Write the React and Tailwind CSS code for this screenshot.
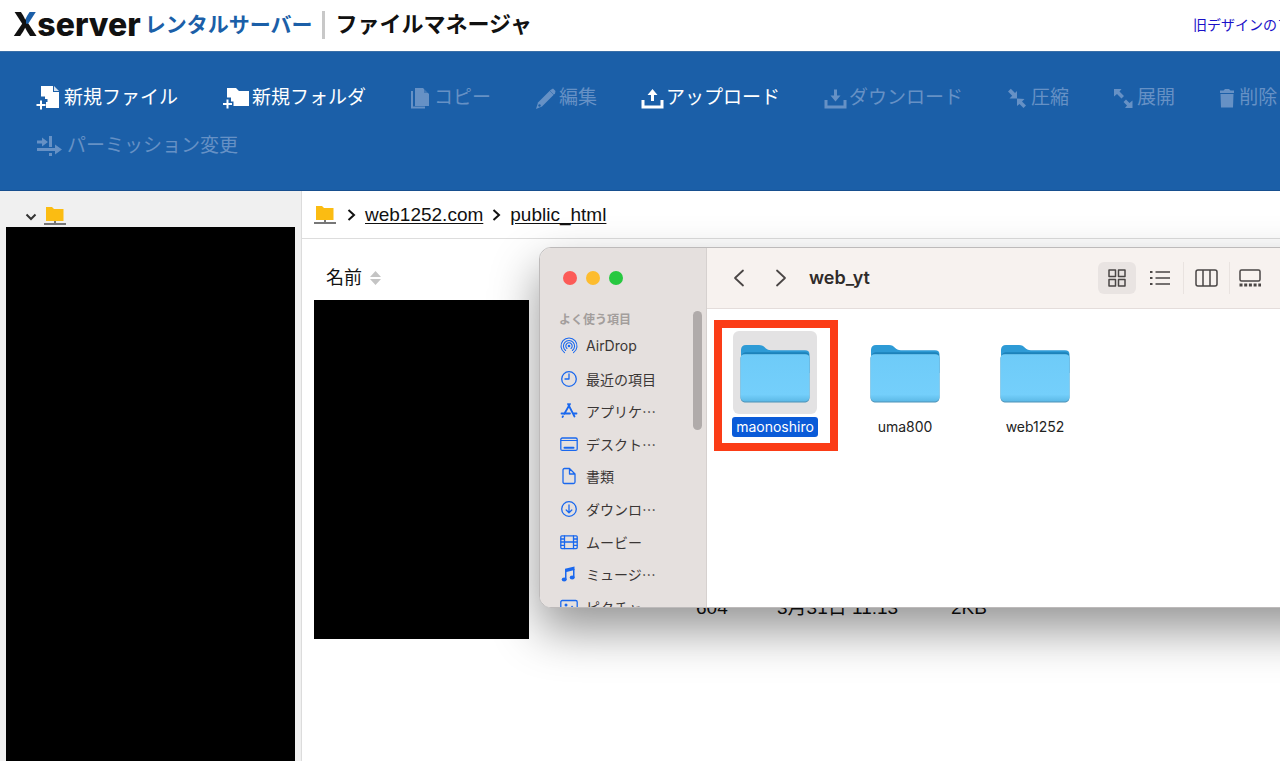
const ink = "text-[#111111]";

function Svg({ w, h, box, className = "", children }) {
  return (
    <svg width={w} height={h} viewBox={box || `0 0 ${w} ${h}`} className={`shrink-0 ${className}`} fill="none" aria-hidden="true">
      {children}
    </svg>
  );
}

const NewFileIcon = () => (
  <Svg w={24} h={26}>
    <path d="M5 1H17V7H23V23H10V17H11.500V14H9V11.500H5Z" fill="currentColor" />
    <path d="M18 1L23 6H18Z" fill="currentColor" fillOpacity=".8" />
    <path d="M5 15.500V24.500M.5 20H9.500" stroke="currentColor" strokeWidth="2" />
  </Svg>
);
const NewFolderIcon = () => (
  <Svg w={28} h={26}>
    <path d="M5 3H14L17 6H27V21H11.500V16.500H9V12.500H5Z" fill="currentColor" />
    <path d="M5.500 14.500V23.500M1 19H10" stroke="currentColor" strokeWidth="2" />
  </Svg>
);
const CopyIcon = () => (
  <Svg w={20} h={26}>
    <path d="M5 3H13L19 9V21H5Z" fill="currentColor" />
    <path d="M14 3L19 8H14Z" fill="#1b5fa8" fillOpacity=".5" />
    <path d="M2 6V22.500H15" stroke="currentColor" strokeWidth="2" />
  </Svg>
);
const EditIcon = () => (
  <Svg w={22} h={26}>
    <path d="M15.500 5L18 3.500L20.500 6L20 8.500L7 21.500L1 24L3 17.500Z" fill="currentColor" />
    <path d="M14.500 5.500L19 10" stroke="#1b5fa8" strokeOpacity=".5" />
    <circle cx="4.500" cy="20.500" r="1.200" fill="#1b5fa8" />
  </Svg>
);
const UploadIcon = () => (
  <Svg w={23} h={26}>
    <path d="M2 15V22H21V15" stroke="currentColor" strokeWidth="3" />
    <path d="M11.500 4L16.500 10H13V16H10V10H6.500Z" fill="currentColor" />
  </Svg>
);
const DownloadIcon = () => (
  <Svg w={23} h={26}>
    <path d="M2 15V22H21V15" stroke="currentColor" strokeWidth="3" />
    <path d="M11.500 16.500L6.500 10.500H10V4.500H13V10.500H16.500Z" fill="currentColor" />
  </Svg>
);
const CompressIcon = () => (
  <Svg w={20} h={26}>
    <path d="M10 13.500V6L8 8L3.800 3.800L1 6.600L5.200 10.800L2.500 13.500Z" fill="currentColor" />
    <path d="M10 13.500V21L12.500 19L16.500 23L19 20.500L15 16.500L17.500 14Z" fill="currentColor" />
  </Svg>
);
const ExpandIcon = () => (
  <Svg w={20} h={26}>
    <path d="M1 4H8.500L6.500 6.500L11 11L8.500 13.500L4 9L1 11.500Z" fill="currentColor" />
    <path d="M19.500 23H12L14 20.500L10.500 17L13 14.500L16.500 18L19.500 15.500Z" fill="currentColor" />
  </Svg>
);
const TrashIcon = () => (
  <Svg w={16} h={26}>
    <path d="M4.500 5.500L6 4H10L11.500 5.500H15V8H1V5.500ZM1.500 9H14.500L14 22.500H2Z" fill="currentColor" />
  </Svg>
);
const PermissionIcon = () => (
  <Svg w={27} h={26}>
    <path d="M1 9H8M1 16.500H20" stroke="currentColor" strokeWidth="3" />
    <path d="M6 4.500L12 9L6 13.500ZM19 11.500L26 16.500L19 21.500Z" fill="currentColor" />
    <path d="M14.500 3V14M14.500 20V23" stroke="currentColor" strokeWidth="3" />
  </Svg>
);

const toolRows = [
  [
    ["新規ファイル", NewFileIcon, true, "gap-1"],
    ["新規フォルダ", NewFolderIcon, true, "gap-0.5"],
    ["コピー", CopyIcon, false, "gap-1"],
    ["編集", EditIcon, false, "gap-0.5"],
    ["アップロード", UploadIcon, true, "gap-0.5"],
    ["ダウンロード", DownloadIcon, false, "gap-0.5"],
    ["圧縮", CompressIcon, false, "gap-1"],
    ["展開", ExpandIcon, false, "gap-1"],
    ["削除", TrashIcon, false, "gap-1"],
  ],
  [["パーミッション変更", PermissionIcon, false, "gap-1"]],
];

function ServerFolder() {
  return (
    <Svg w={22} h={20}>
      <path d="M2 1H8L10 3H19.500V15H2Z" fill="#fbbc12" />
      <path d="M0 18H22M11 15V19" stroke="#777777" strokeWidth="2" />
    </Svg>
  );
}

function Chevron() {
  return (
    <Svg w={9} h={14}>
      <path d="M1.500 2L7 7L1.500 12" stroke="#111111" strokeWidth="2" />
    </Svg>
  );
}

const s = { stroke: "#1a68ee", strokeWidth: 1.3, strokeLinecap: "round", strokeLinejoin: "round" };
const places = [
  ["AirDrop", <>
    <circle cx="9" cy="9" r="1.300" fill="#1a68ee" />
    <path {...s} strokeWidth="1.1" d="M7 11.500A3.200 3.200 0 1 1 11 11.500M5.600 13.500A5.600 5.600 0 1 1 12.400 13.500M4.500 15.600A8 8 0 1 1 13.500 15.600" />
  </>],
  ["最近の項目", <><circle {...s} cx="9" cy="9" r="7.300" /><path {...s} d="M9 4V9H5" /></>],
  ["アプリケ…", <path {...s} strokeWidth="1.8" d="M10 2L4.200 12M8 2L14.500 14.500M1.500 11.500H10M13 11.500H16.500M3 14.200L2.500 15" />],
  ["デスクト…", <><rect {...s} x=".8" y="3" width="16.400" height="12.400" rx="1.500" /><path {...s} strokeWidth="1" d="M1 5.500H17" /><path {...s} strokeWidth="2" d="M4.500 12.700H13.500" /></>],
  ["書類", <path {...s} d="M4.500 1.500H9.500L15 7V15C15 16 14.500 16.500 13.500 16.500H4.500C3.500 16.500 3 16 3 15V3C3 2 3.500 1.500 4.500 1.500ZM9.500 1.500V7H15" />],
  ["ダウンロ…", <><circle {...s} cx="9" cy="9" r="7.300" /><path {...s} d="M9 5V12.500M6.200 10L9 12.700L11.800 10" /></>],
  ["ムービー", <><rect {...s} x=".8" y="2.800" width="16.400" height="12.800" rx="1" /><path {...s} d="M4.500 3V15.500M13.500 3V15.500M4.500 9H13.500M1 6H4.500M1 9H4.500M1 12.300H4.500M13.500 6H17M13.500 9H17M13.500 12.300H17" /></>],
  ["ミュージ…", <><path d="M5 3.800L14.500 1.500V5L6.500 7V14.500H5Z" fill="#1a68ee" /><path d="M13 4H14.500V12.500H13Z" fill="#1a68ee" /><ellipse cx="4.200" cy="14.500" rx="2.500" ry="2" fill="#1a68ee" /><ellipse cx="12.200" cy="12.600" rx="2.500" ry="2" fill="#1a68ee" /></>],
  ["ピクチャ", <><rect {...s} x=".8" y="2.500" width="16.400" height="13" rx="1.500" /><circle cx="6" cy="7" r="1.500" fill="#1a68ee" /><path d="M2 14L7 10L9 11.500L12 7.500L16 12V14Z" fill="#1a68ee" /></>],
];

function FolderPicture() {
  return (
    <svg width="70" height="60" viewBox="0 0 70 62" preserveAspectRatio="none" aria-hidden="true">
      <defs>
        <linearGradient id="folderFront" x1="0" y1="0" x2="0" y2="1">
          <stop offset="0" stopColor="#6ecbf8" />
          <stop offset=".85" stopColor="#74cffb" />
          <stop offset="1" stopColor="#5cb9e6" />
        </linearGradient>
      </defs>
      <path d="M1 6C1 3 3 1 6 1H19C25 1 25 6.500 31 6.500H65C68 6.500 69.500 8 69.500 11V30H1Z" fill="#2e9bd6" />
      <path d="M2 12C2 9.500 4 8.500 6 8.500H65C68 8.500 69 10 69 12V20H2Z" fill="#1c82ba" />
      <path d="M.5 15C.5 12 2 10.500 5 10.500H65C68 10.500 69.500 12 69.500 15V55C69.500 58.500 67.500 60.500 64 60.500H6C2.500 60.500 .5 58.500 .5 55Z" fill="#4f93b8" />
      <path d="M.5 15C.5 12 2 10.500 5 10.500H65C68 10.500 69.500 12 69.500 15V54C69.500 57.500 67.500 59.500 64 59.500H6C2.500 59.500 .5 57.500 .5 54Z" fill="url(#folderFront)" />
    </svg>
  );
}

function FolderItem({ name, selected }) {
  return (
    <li className="relative w-[130px]">
      <button className="flex w-full flex-col items-center gap-[3px]">
        <span className={`flex h-[83px] w-[84px] items-end justify-center rounded-md pb-2.5 ${selected ? "bg-[#e3e2e3]" : ""}`}>
          <FolderPicture />
        </span>
        <span className={`rounded-[3px] px-1 text-[14px] leading-5 ${selected ? "bg-[#0a5bd8] text-white" : "text-[#222222]"}`}>
          {name}
        </span>
      </button>
      {selected && <div className="pointer-events-none absolute -top-[11px] left-1 h-[131px] w-[124px] border-8 border-[#fb3c16]" />}
    </li>
  );
}

const k = { stroke: "#4a4645", strokeWidth: 1.5 };

function FinderWindow() {
  return (
    <section
      aria-label="web_yt"
      className="absolute top-[247px] -right-20 left-[539px] flex h-[361px] overflow-hidden rounded-xl border border-[#bdbaba] bg-white font-[Inter,'Noto_Sans_CJK_JP',sans-serif] shadow-[0_22px_48px_rgba(0,0,0,0.42)]"
    >
      <aside className="relative w-[167px] shrink-0 border-r border-[#d6d1cf] bg-[#e5e0de]">
        <div className="flex gap-[9px] pt-[23px] pl-[23px]">
          <button aria-label="閉じる" className="size-3.5 rounded-full bg-[#fc5b57]" />
          <button aria-label="最小化" className="size-3.5 rounded-full bg-[#fdbc2e]" />
          <button aria-label="拡大" className="size-3.5 rounded-full bg-[#27c840]" />
        </div>
        <h2 className="mt-[25px] pl-[19px] text-[12px] leading-5 font-bold text-[#a39e9c]">よく使う項目</h2>
        <ul className="grid h-[293px] auto-rows-fr pl-5">
          {places.map(([name, icon]) => (
            <li key={name} className="flex items-center">
              <a href="#" className="flex items-center gap-2 text-[14px] leading-5 text-[#3a3635]">
                <Svg w={18} h={18}>{icon}</Svg>
                <span className={name === "AirDrop" ? "" : "font-['Noto_Sans_CJK_JP',sans-serif]"}>{name}</span>
              </a>
            </li>
          ))}
        </ul>
        <div className="absolute top-[63px] right-1 h-[119px] w-[9px] rounded-full bg-[#b0abaa]" />
      </aside>

      <div className="flex min-w-0 flex-1 flex-col">
        <header className="flex h-[61px] shrink-0 items-center border-b border-[#e4dddb] bg-[#f7f2ef] pr-[89px] pl-6">
          <button aria-label="戻る" className="mr-[26px]">
            <Svg w={16} h={18}><path {...k} strokeWidth="1.800" strokeLinecap="round" strokeLinejoin="round" d="M12 1.500L4 9L12 16.500" /></Svg>
          </button>
          <button aria-label="進む" className="mr-5">
            <Svg w={16} h={18}><path {...k} strokeWidth="1.800" strokeLinecap="round" strokeLinejoin="round" d="M4 1.500L12 9L4 16.500" /></Svg>
          </button>
          <h1 className="text-[18px] leading-6 font-semibold text-[#2f2b2a]">web_yt</h1>
          <div className="ml-auto flex items-center">
            <button aria-label="アイコン表示" className="flex h-8 w-[38px] items-center justify-center rounded-md bg-[#e9e4e2]">
              <Svg w={18} h={18}>
                <path {...k} strokeLinejoin="round" d="M1 1H7.500V7.500H1ZM10.500 1H17V7.500H10.500ZM1 10.500H7.500V17H1ZM10.500 10.500H17V17H10.500Z" />
              </Svg>
            </button>
            <button aria-label="リスト表示" className="flex h-8 w-12 items-center justify-center border-r border-[#e9e3e0]">
              <Svg w={20} h={16}>
                <path {...k} d="M5.500 2H20M5.500 8H20M5.500 14H20" />
                <path {...k} strokeWidth="2" d="M0 2H2.500M0 8H2.500M0 14H2.500" />
              </Svg>
            </button>
            <button aria-label="カラム表示" className="flex h-8 w-[46px] items-center justify-center border-r border-[#e9e3e0]">
              <Svg w={23} h={18}>
                <rect {...k} x="1" y="1" width="21" height="16" rx="2" />
                <path {...k} d="M8 1V17M15 1V17" />
              </Svg>
            </button>
            <button aria-label="ギャラリー表示" className="flex h-8 w-10 items-center justify-center">
              <Svg w={22} h={18}>
                <rect {...k} x="1" y="1" width="20" height="11" rx="1.500" />
                <path {...k} strokeWidth="3" strokeDasharray="3 1.700" d="M.5 16H22" />
              </Svg>
            </button>
          </div>
        </header>
        <ul className="flex pt-[22px] pl-[3px]">
          <FolderItem name="maonoshiro" selected />
          <FolderItem name="uma800" />
          <FolderItem name="web1252" />
        </ul>
      </div>
    </section>
  );
}

export default function App() {
  return (
    <div className={`relative flex h-screen flex-col overflow-hidden bg-white font-['Liberation_Sans','Noto_Sans_CJK_JP',sans-serif] ${ink}`}>
      <header className="flex h-[51px] shrink-0 items-center pb-0.5 pl-[13px] whitespace-nowrap">
        <a href="#" className="flex items-center">
          <span className="font-[Inter,sans-serif] text-[32px] leading-10 font-extrabold">
            <span className="bg-[#111111] bg-[linear-gradient(#1b5fa8,#1b5fa8)] bg-[length:46%_48%] bg-[position:100%_0%] bg-clip-text bg-no-repeat text-transparent">X</span>server
          </span>
          <span className="ml-1 text-[21px] leading-8 font-bold text-[#1b5fa8]">レンタルサーバー</span>
        </a>
        <span className="mr-2.5 ml-2.5 h-7 w-[3px] bg-[#c8c8c8]" />
        <h1 className="text-[22px] leading-8 font-bold">ファイルマネージャ</h1>
        <a href="#" className="ml-auto w-[87px] overflow-hidden text-[14px] leading-5 text-[#1a10c8]">旧デザインのフ</a>
      </header>

      <nav className="flex h-[140px] shrink-0 flex-col gap-5 overflow-hidden border-y border-t-[#3a6fa8] border-b-[#174f8f] bg-[#1b5fa8] pt-8 pl-9 whitespace-nowrap">
        {toolRows.map((row, i) => (
          <div key={i} className="flex gap-11">
            {row.map(([label, Icon, enabled, gap]) => (
              <button
                key={label}
                disabled={!enabled}
                className={`flex shrink-0 items-center text-[19px] leading-7 ${gap} ${enabled ? "text-white" : "text-[#6691c5]"}`}
              >
                <Icon />
                {label}
              </button>
            ))}
          </div>
        ))}
      </nav>

      <div className="flex min-h-0 flex-1">
        <aside className="flex w-[302px] shrink-0 flex-col border-r border-[#dcdcdc] bg-[#f0f0f0] px-1.5">
          <div className="flex h-9 shrink-0 items-end gap-[7px] pb-px pl-[19px]">
            <button aria-label="展開" className="pb-[3px]">
              <Svg w={12} h={12}><path d="M1.500 3.500L6 8L10.500 3.500" stroke="#333333" strokeWidth="2" /></Svg>
            </button>
            <ServerFolder />
          </div>
          <div className="flex-1 bg-black" />
        </aside>

        <main className="min-w-0 flex-1">
          <div className="flex h-12 items-center gap-[11px] border-b border-[#dddddd] pl-3">
            <ServerFolder />
            <div className="flex items-center gap-[9px] text-[19px] leading-6">
              <Chevron />
              <a href="#" className="underline underline-offset-2">web1252.com</a>
              <Chevron />
              <a href="#" className="underline underline-offset-2">public_html</a>
            </div>
          </div>
          <table className="mt-4 ml-3 table-fixed border-collapse text-left">
            <thead>
              <tr className="h-[45px] align-top text-[18px]">
                <th className="w-[382px] pt-[9px] pl-3 font-normal">
                  <button className="flex items-center gap-2 leading-7">
                    名前
                    <Svg w={11} h={14}><path d="M5.500 0L11 6H0ZM5.500 14L0 8H11Z" fill="#c4c4c4" /></Svg>
                  </button>
                </th>
                <th className="w-[81px]" />
                <th className="w-[174px]" />
                <th className="w-[60px]" />
              </tr>
            </thead>
            <tbody>
              <tr className="align-bottom text-[19px] leading-6 whitespace-nowrap">
                <td><div className="h-[339px] w-[215px] bg-black" /></td>
                <td className="pb-[19px]">604</td>
                <td className="pb-[19px]">3月31日 11:13</td>
                <td className="pb-[19px]">2KB</td>
              </tr>
            </tbody>
          </table>
        </main>
      </div>

      <FinderWindow />
    </div>
  );
}
